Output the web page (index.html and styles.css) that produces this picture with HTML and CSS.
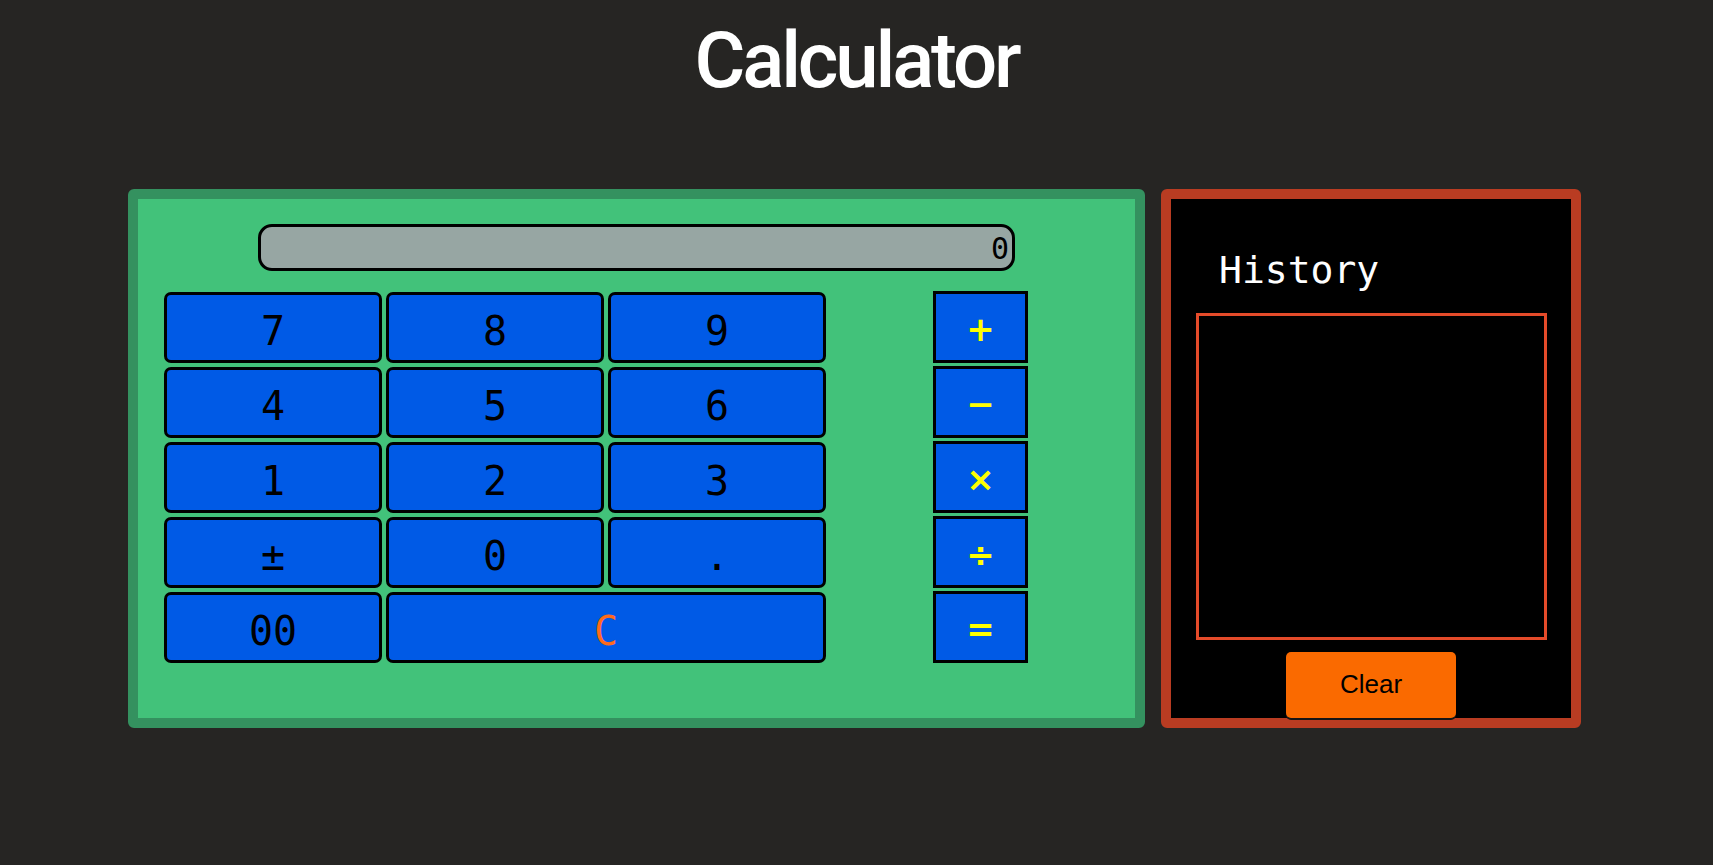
FILE: index.html
```html
<!DOCTYPE html>
<html lang="en">
<head>
<meta charset="utf-8">
<title>Calculator</title>
<link rel="stylesheet" href="styles.css">
</head>
<body>
  <h1 class="title">Calculator</h1>
  <main class="app">
    <section class="calc">
      <div class="display">0</div>
      <div class="keypad">
        <div class="nums">
          <button class="key">7</button>
          <button class="key">8</button>
          <button class="key">9</button>
          <button class="key">4</button>
          <button class="key">5</button>
          <button class="key">6</button>
          <button class="key">1</button>
          <button class="key">2</button>
          <button class="key">3</button>
          <button class="key">±</button>
          <button class="key">0</button>
          <button class="key">.</button>
          <button class="key">00</button>
          <button class="key key-clear">C</button>
        </div>
        <div class="ops">
          <button class="op">+</button>
          <button class="op">−</button>
          <button class="op">×</button>
          <button class="op">÷</button>
          <button class="op">=</button>
        </div>
      </div>
    </section>
    <section class="history">
      <h2 class="history-title">History</h2>
      <div class="history-box"></div>
      <button class="clear-btn">Clear</button>
    </section>
  </main>
</body>
</html>
```

FILE: styles.css
```css
* { box-sizing: border-box; }

body {
  margin: 0;
  background: #262523;
  font-family: "DejaVu Sans Mono", monospace;
}

.title {
  margin: 0;
  padding-top: 22px;
  font-family: Roboto, "Open Sans", sans-serif;
  font-weight: 500;
  font-size: 78px;
  line-height: 78px;
  letter-spacing: -3.2px;
  color: #ffffff;
  text-align: center;
}

.app {
  display: flex;
  justify-content: center;
  gap: 16px;
  margin-top: 89px;
  padding-right: 4px;
}

.calc {
  width: 1017px;
  height: 539px;
  border: 10px solid #34915f;
  border-radius: 6px;
  background: #42c27a;
  padding-top: 25px;
}

.display {
  width: 757px;
  height: 47px;
  margin: 0 auto;
  border: 3px solid #000;
  border-radius: 14px;
  background: #97a6a3;
  font-family: "DejaVu Sans Mono", monospace;
  font-size: 30px;
  line-height: 43px;
  text-align: right;
  padding-right: 3px;
  color: #000;
  overflow: hidden;
}

.keypad {
  display: flex;
  align-items: flex-end;
  margin-top: 20px;
  padding-left: 26px;
}

.nums {
  display: grid;
  grid-template-columns: repeat(3, 218px);
  grid-auto-rows: 71px;
  gap: 4px;
}

.key {
  border: 3px solid #000;
  border-radius: 7px;
  background: #005ae6;
  color: #000;
  font-family: "DejaVu Sans Mono", monospace;
  font-size: 40px;
  padding: 7px 0 0;
  margin: 0;
}

.key-clear {
  grid-column: span 2;
  color: #ff6a1a;
}

.ops {
  display: flex;
  flex-direction: column;
  gap: 3px;
  margin-left: 107px;
}

.op {
  width: 95px;
  height: 72px;
  border: 3px solid #000;
  border-radius: 0;
  background: #005ae6;
  color: #ffff00;
  font-family: "DejaVu Sans", sans-serif;
  font-weight: bold;
  font-size: 34px;
  padding: 4px 0 0;
  margin: 0;
}

.history {
  width: 420px;
  height: 539px;
  border: 10px solid #b93c22;
  border-radius: 6px;
  background: #000;
  display: flex;
  flex-direction: column;
}

.history-title {
  margin: 49px 0 0 48px;
  font-family: "DejaVu Sans Mono", monospace;
  font-weight: normal;
  font-size: 38px;
  line-height: 44px;
  color: #fff;
}

.history-box {
  margin: 21px 0 0 25px;
  width: 351px;
  height: 327px;
  border: 3px solid #e54b2a;
}

.clear-btn {
  margin: 12px auto 0;
  width: 170px;
  height: 66px;
  border: none;
  border-radius: 5px;
  background: #fa6a00;
  color: #000;
  font-family: "Liberation Sans", Arial, sans-serif;
  font-size: 26px;
  box-shadow: 0 2px 0 #151515;
  padding: 0 0 2px;
}
```
